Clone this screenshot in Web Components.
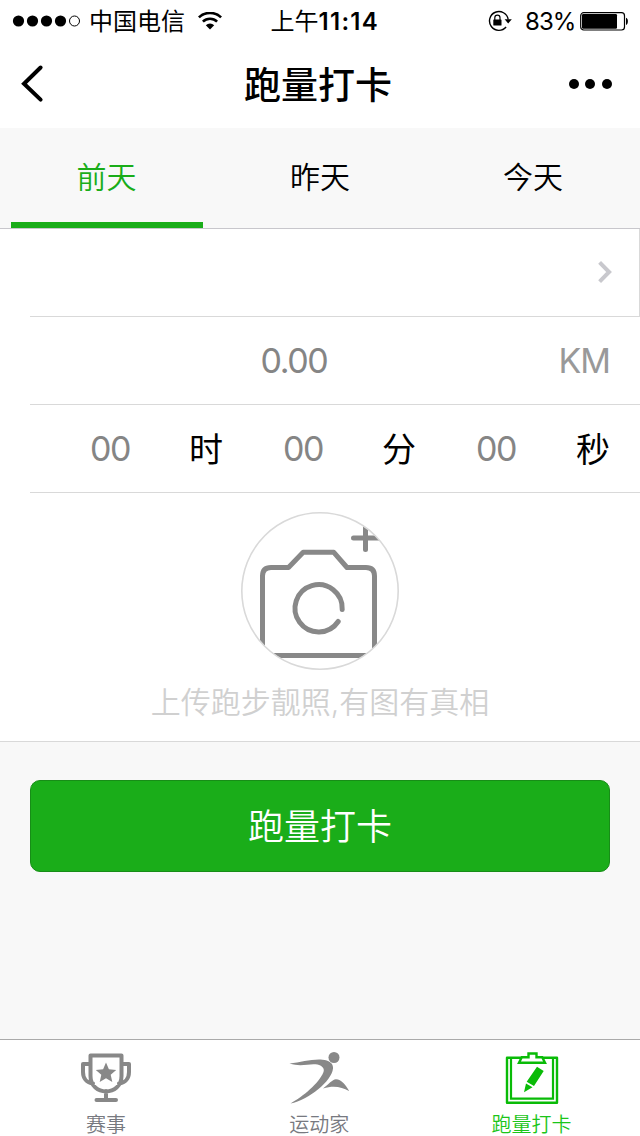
<!DOCTYPE html>
<html lang="zh-CN">
<head>
<meta charset="utf-8">
<title>跑量打卡</title>
<style>
html,body{margin:0;height:100%}
body{font-family:Inter,"Noto Sans CJK SC",sans-serif;color:#000;background:#f8f8f8;overflow:hidden}
</style>
</head>
<body>
<run-app></run-app>
<script>
function define(name, html, setup) {
  const template = document.createElement('template');
  template.innerHTML = html;
  customElements.define(name, class extends HTMLElement {
    connectedCallback() {
      if (this.shadowRoot) return;
      this.attachShadow({mode: 'open'}).append(template.content.cloneNode(true));
      if (setup) setup(this, this.shadowRoot);
    }
  });
}

define('status-bar', `
<style>
:host{display:grid;grid-template-columns:1fr auto 1fr;height:40px;line-height:40px;font-size:24px;background:#fff;white-space:nowrap}
div{display:flex;align-items:center}
svg{display:block;flex:none}
span,b{padding-top:2px}
.left{padding-left:12px}.left span{margin:0 13px 0 8px}
.mid{width:108px;margin-left:9px}
.mid b{font-weight:600;font-size:24px;letter-spacing:1.3px}
.right{justify-content:flex-end;padding-right:11px}
.right span{margin:0 6px 0 13px;width:49px;letter-spacing:-.9px}
</style>
<div class="left">
<svg width="69" height="14" viewBox="0 0 69 14"><circle cx="6.5" cy="7" r="5.6"/><circle cx="20.5" cy="7" r="5.6"/><circle cx="34.5" cy="7" r="5.6"/><circle cx="48.5" cy="7" r="5.6"/><circle cx="62.5" cy="7" r="5" fill="none" stroke="#000"/></svg>
<span>中国电信</span>
<svg width="24" height="18" viewBox="0 0 24 18"><path d="M.9 5.4a16 16 0 0 1 22.2 0M4.9 9.6a10.2 10.2 0 0 1 14.2 0" fill="none" stroke="#000" stroke-width="2.6"/><path d="M12 17.4l-4.2-4.1a6 6 0 0 1 8.4 0z"/></svg>
</div>
<div class="mid"><span>上午</span><b>11:14</b></div>
<div class="right">
<svg width="24" height="22" viewBox="0 0 24 22"><path d="M18.1 17A9.4 9.4 0 1 1 20.2 9.5" fill="none" stroke="#000" stroke-width="1.4"/><path d="M16.600 9.300h7.200l-3.600 4.200z"/><rect x="5.300" y="9.400" width="8.200" height="6.100" rx=".6"/><path d="M6.800 10V7.700a2.600 2.600 0 0 1 5.200 0V10" fill="none" stroke="#000" stroke-width="1.2"/></svg>
<span>83%</span>
<svg width="49" height="20" viewBox="0 0 49 20"><rect x=".7" y="1.700" width="43.800" height="17.300" rx="3" fill="none" stroke="#000" stroke-width="1.2"/><rect x="2" y="3" width="35" height="14.800" rx="1.2"/><path d="M46 6.800c2.500.5 2.500 6.700 0 7.200z"/></svg>
</div>`);

define('nav-bar', `
<style>
:host{display:grid;grid-template-columns:92px 1fr 92px;align-items:center;height:88px;background:#fff}
h1{margin:4px 4px 0 0;text-align:center;font-size:37px;font-weight:500;line-height:54px;white-space:nowrap}
svg{display:block}
</style>
<svg width="92" height="88" viewBox="0 0 92 88"><path d="M40.600 27.500L24 43.800l16.600 15.800" fill="none" stroke="#000" stroke-width="4" stroke-linecap="round"/></svg>
<h1><slot></slot></h1>
<svg width="92" height="88" viewBox="0 0 92 88"><circle cx="26" cy="44" r="5"/><circle cx="42" cy="44" r="5"/><circle cx="59" cy="44" r="5"/></svg>`);

define('day-tabs', `
<style>:host{display:grid;grid-template-columns:repeat(3,1fr);height:100px;border-bottom:1px solid #c8c7cc;background:#f8f8f8}</style><slot></slot>`);

define('day-tab', `
<style>
:host{display:flex;flex-direction:column;justify-content:space-between;font-size:30px;font-weight:350;line-height:44px;text-align:center;padding:27px 11px 0}
:host([active]){color:#1aad19}
span{margin-right:1px}
i{display:block;height:6px}
:host([active]) i{background:#1aad19;width:192px}
</style><span><slot></slot></span><i></i>`);

define('form-row', `
<style>
:host{display:block;padding-left:30px;background:#fff;font-size:34px;line-height:50px}
div{display:flex;align-items:center;height:87px;border-bottom:1px solid #d9d9d9;padding-right:30px}
:host([picker]) div{justify-content:flex-end;border-right:1px solid #d9d9d9;padding-right:26px}
</style><div><slot></slot></div>`);

define('place-value', `
<style>
:host{display:block;color:#858585;text-align:center;font-weight:400;line-height:50px;letter-spacing:-1.4px}
</style><slot></slot>`);

define('unit-label', `
<style>
:host{display:block;width:34px;font-weight:400;line-height:50px;padding-top:2px}
:host([muted]){width:auto;margin-left:auto;padding:0;color:#999;font-weight:370;letter-spacing:-1px}
</style><slot></slot>`);

define('chevron-icon', `
<style>:host,svg{display:block}:host{padding-bottom:1px}</style>
<svg width="16" height="24" viewBox="0 0 16 24"><path d="M2.600 2.400l9.500 9.600-9.500 9.600" fill="none" stroke="#c8c8cd" stroke-width="4"/></svg>`);

define('photo-upload', `
<style>
:host{display:flex;flex-direction:column;align-items:center;height:248px;background:#fff;border-bottom:1px solid #d9d9d9}
svg{display:block;margin-top:19px}
p{margin:10px 0 0;font-size:30px;font-weight:350;line-height:44px;color:#d0d0d0;white-space:nowrap}
</style>
<svg width="158" height="158" viewBox="0 0 158 158">
<defs><clipPath id="round"><circle cx="79" cy="79" r="78"/></clipPath></defs>
<g clip-path="url(#round)" fill="none" stroke="#888" stroke-width="5" stroke-linejoin="round">
<path d="M21.500 150V64q0-8.500 8.500-8.500h17.500L62.200 40.300h30.600L106 55.500h19q8.500 0 8.500 8.500v86M21 143.500h114"/>
<path d="M97.200 109.500a23.600 23.600 0 1 1 4-12" stroke-linecap="round" stroke-width="5"/>
<path d="M112.500 26h30M124.500 12v25.500" stroke-linecap="round"/>
</g><circle cx="79" cy="79" r="78.200" fill="none" stroke="#d9d9d9" stroke-width="1.600"/></svg>
<p><slot></slot></p>`);

define('primary-button', `
<style>
:host{display:block;padding:38px 30px 0}
button{display:block;width:100%;height:92px;margin:0;padding:2px 0 0;border:1px solid #178d17;border-radius:10px;background:#1aad19;color:#fff;font:350 36px/54px Inter,"Noto Sans CJK SC",sans-serif}
</style><button><slot></slot></button>`);

define('tab-bar', `
<style>:host{display:grid;grid-template-columns:repeat(3,1fr);height:96px;margin-top:auto;border-top:1px solid #aaa;background:#fff}</style><slot></slot>`);

const icons = {
  cup: '<g fill="none" stroke="#888" stroke-width="4" stroke-linejoin="round"><path d="M14.500 5.500h31v20.500c0 20.500-31 20.500-31 0zM14.500 14H7v8c0 6 3.500 11 10 11.500M45.500 14H53v8c0 6-3.500 11-10 11.500M30 41v8M20.500 50H40" stroke-linecap="round"/></g><path d="M30 12.500l2.900 6.700 7.300.7-5.500 4.900 1.600 7.200-6.300-3.800-6.300 3.800 1.600-7.200-5.500-4.900 7.300-.7z" fill="#888"/>',
  runner: '<g fill="#888"><circle cx="45" cy="7.500" r="5.500"/><path d="M.5 13.500C12 12.300 23 8.800 33.500 9.700c6.500.6 11 3.700 10.500 8.700C42.800 31 20 49.500 1.500 53.500 14 46.300 30 33.500 34.500 22c1-3-.5-6-6-7.400C21 12.800 13 17.500.5 13.500zM34 38.500c6-4.200 9-9 13-9.200 5.500 0 10.500 6.500 13.300 12-7.300-4.300-15.300-6-26.300-2.800z"/></g>',
  board: '<g fill="none" stroke="#09bb07"><path d="M19 7.700H5v45h50v-45H41" stroke-width="2.400" stroke-linejoin="round"/><path d="M9 8v40.700h42V8" stroke-width="2.200"/></g><path d="M17 12.700l2.800-5.500h6.700V3.500h8v3.700h5.700l2.800 5.500z" fill="#fff" stroke="#09bb07" stroke-width="2.400"/><path d="M35 16.700l6.700 4.300-9.700 15-7.300-4.200zM24 33.500l6.500 3.800-8.500 5z" fill="#09bb07"/>'
};

define('tab-item', `
<style>
:host{display:flex;flex-direction:column;align-items:center;font-size:20px;font-weight:350;line-height:28px;color:#777980;padding-right:1.5px}
:host([active]){color:#1bc51a;padding-right:3.500px}
svg{display:block;margin-top:10px}
span{margin-top:5px}
</style><svg width="60" height="56" viewBox="0 0 60 56"></svg><span><slot></slot></span>`,
(host, root) => { root.querySelector('svg').innerHTML = icons[host.getAttribute('icon')]; });

define('run-app', `
<style>
:host{display:flex;flex-direction:column;width:640px;height:1136px;background:#f8f8f8}
:host>*{flex:none}
.distance{width:132px;margin-left:198px}
.time{width:60px;margin:0 49px 0 50px}
.time.last{margin-right:50px}
</style>
<status-bar></status-bar>
<nav-bar>跑量打卡</nav-bar>
<day-tabs><day-tab active>前天</day-tab><day-tab>昨天</day-tab><day-tab>今天</day-tab></day-tabs>
<form-row picker><chevron-icon></chevron-icon></form-row>
<form-row><place-value class="distance">0.00</place-value><unit-label muted>KM</unit-label></form-row>
<form-row><place-value class="time">00</place-value><unit-label>时</unit-label><place-value class="time">00</place-value><unit-label>分</unit-label><place-value class="time last">00</place-value><unit-label>秒</unit-label></form-row>
<photo-upload>上传跑步靓照,有图有真相</photo-upload>
<primary-button>跑量打卡</primary-button>
<tab-bar><tab-item icon="cup">赛事</tab-item><tab-item icon="runner">运动家</tab-item><tab-item icon="board" active>跑量打卡</tab-item></tab-bar>`);
</script>
</body>
</html>
